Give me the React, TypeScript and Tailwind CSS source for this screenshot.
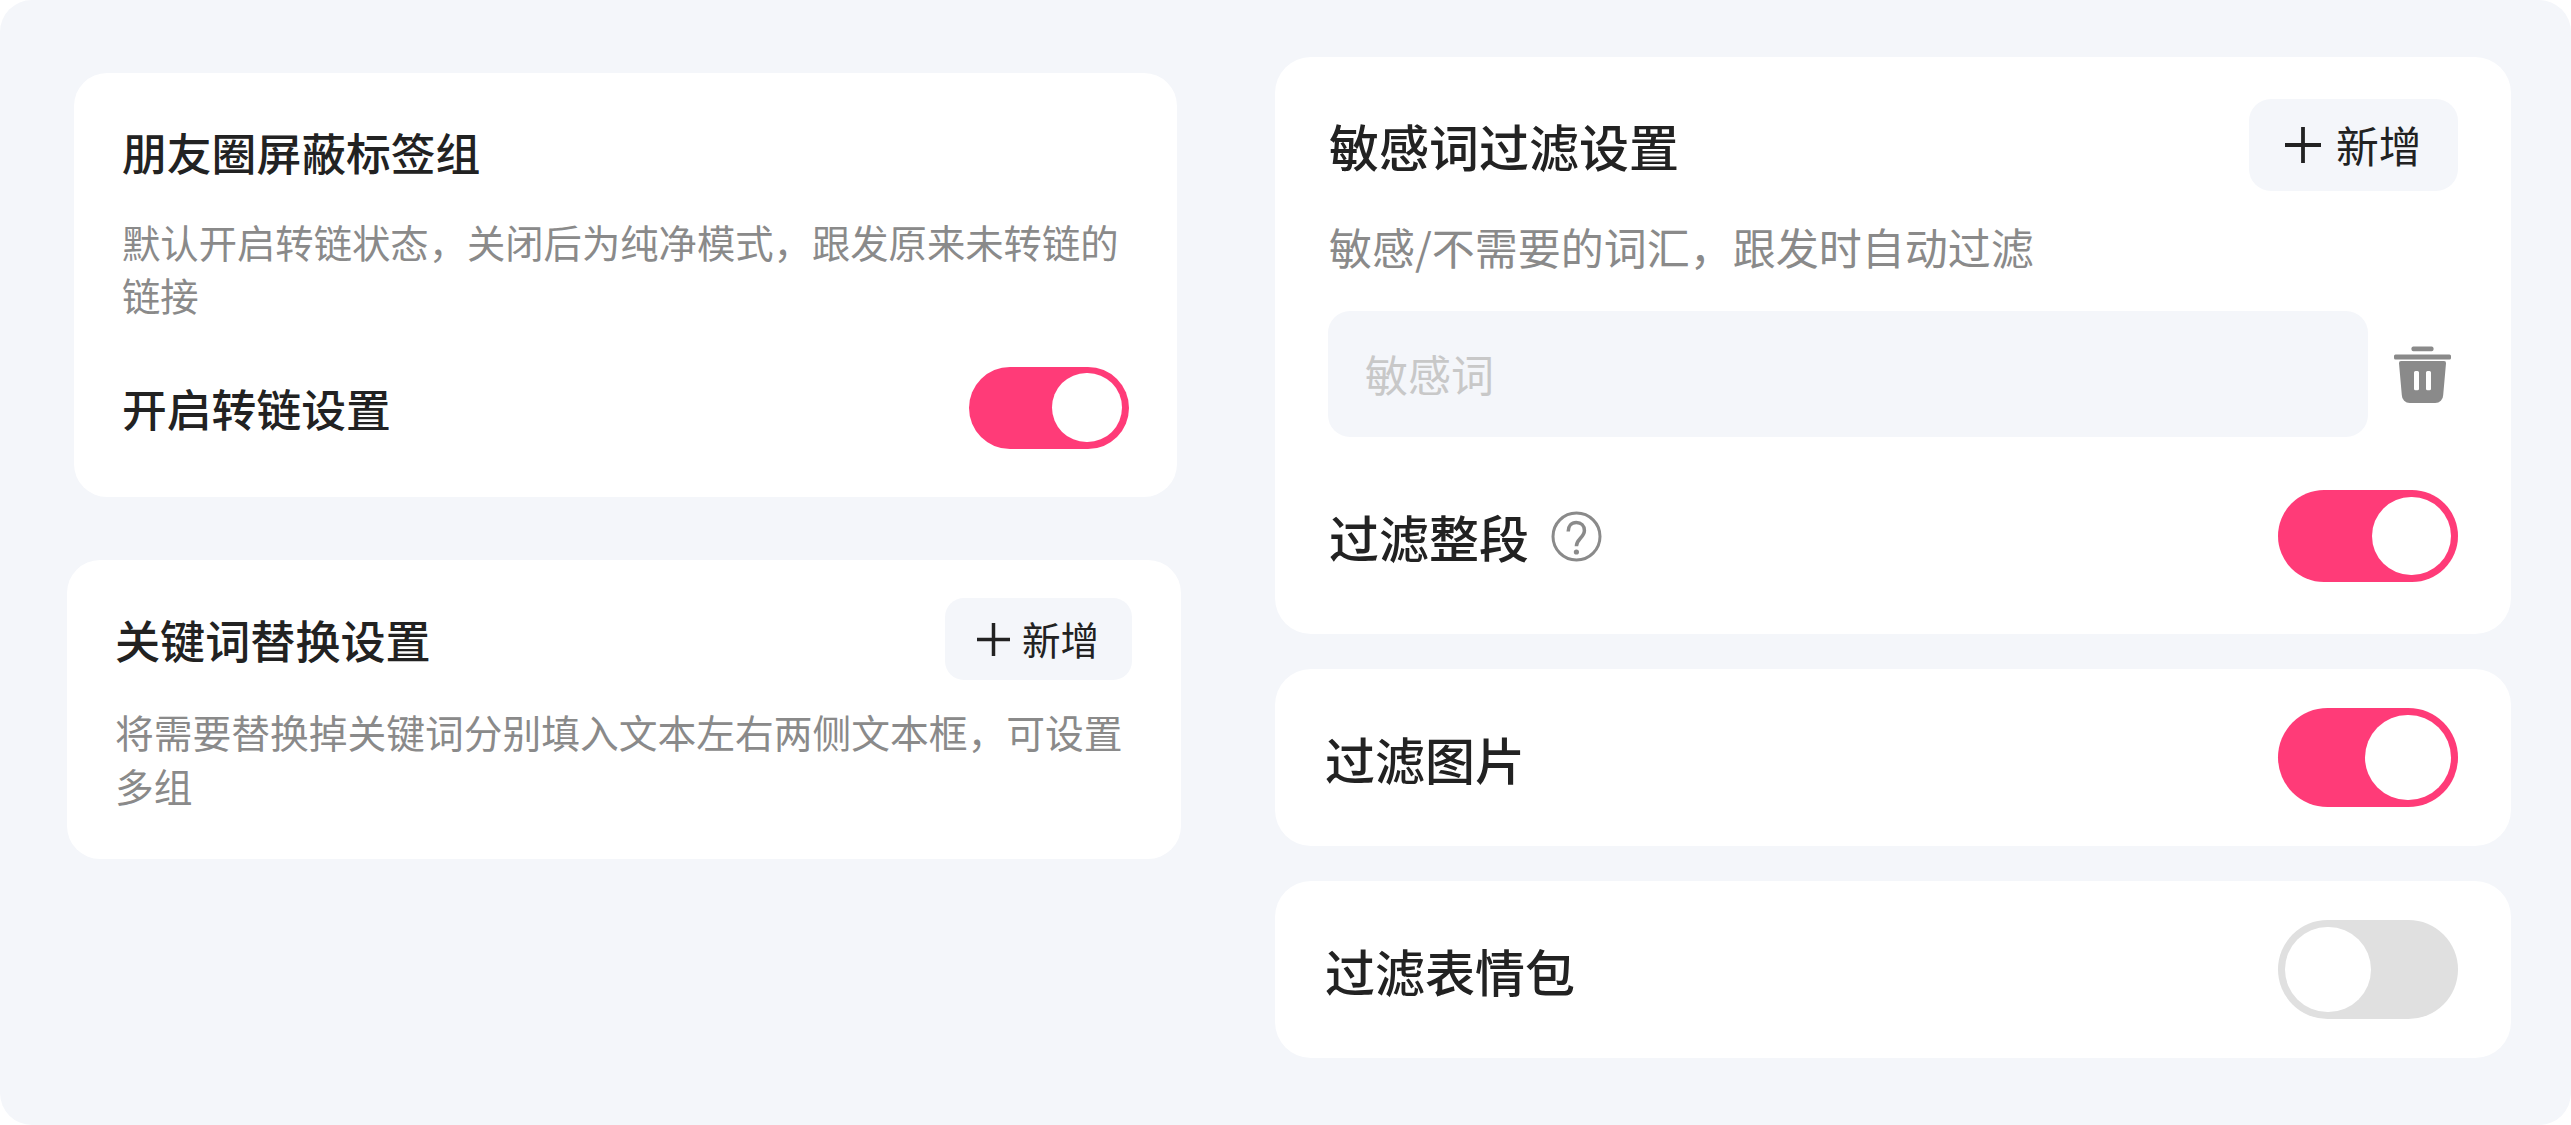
import React, { useState } from 'react';

function PlusIcon({ className }: { className: string }) {
  return (
    <svg className={className} viewBox="0 0 36 36" fill="none" stroke="currentColor" strokeWidth="3.8">
      <path d="M18 0v36M0 18h36" />
    </svg>
  );
}

function TrashIcon() {
  return (
    <svg className="w-[57px] h-[57px] shrink-0" viewBox="0 0 57 57" fill="#8a8a8a">
      <rect x="17.5" y="0.5" width="22" height="4.8" rx="1.8" />
      <rect x="0" y="8.4" width="57" height="5" rx="1.5" />
      <path
        fillRule="evenodd"
        d="M7 15h43a2 2 0 0 1 2 2.2L49.2 49a8 8 0 0 1-8 8H15.8a8 8 0 0 1-8-8L5 17.2A2 2 0 0 1 7 15zM21.5 25a1.5 1.5 0 0 0-1.5 1.5v16.3a1.5 1.5 0 0 0 1.5 1.5h2a1.5 1.5 0 0 0 1.5-1.5V26.5a1.5 1.5 0 0 0-1.5-1.5zM33.5 25a1.5 1.5 0 0 0-1.5 1.5v16.3a1.5 1.5 0 0 0 1.5 1.5h2a1.5 1.5 0 0 0 1.5-1.5V26.5a1.5 1.5 0 0 0-1.5-1.5z"
      />
    </svg>
  );
}

function HelpIcon() {
  return (
    <svg className="w-[51px] h-[51px] shrink-0" viewBox="0 0 51 51" fill="none" stroke="#8a8a8a" strokeWidth="3">
      <circle cx="25.5" cy="25.5" r="23.5" />
      <path d="M17.2 20.500c0-5.600 3.200-9 8.100-9s8.100 3.300 8.100 8c0 3.200-1.600 5.200-4 7.800-2.700 2.900-4 4.200-4 8" strokeWidth="3.500" />
      <circle cx="25.400" cy="41" r="2.600" fill="#8a8a8a" stroke="none" />
    </svg>
  );
}

type SwitchProps = { defaultOn?: boolean; track: string; knob: string };

function Switch({ defaultOn = false, track, knob }: SwitchProps) {
  const [on, setOn] = useState(defaultOn);

  return (
    <button
      type="button"
      role="switch"
      aria-checked={on}
      onClick={() => setOn(!on)}
      className={`flex items-center shrink-0 rounded-full px-[7px] ${on ? 'justify-end bg-[#ff3b78]' : 'justify-start bg-[#e0e0e0]'} ${track}`}
    >
      <span className={`block rounded-full bg-white ${knob}`} />
    </button>
  );
}

export default function App() {
  return (
    <div className="flex items-start w-[2571px] h-[1125px] rounded-[32px] bg-[#f4f6fa] text-[#222222] font-['Noto_Sans_CJK_SC',sans-serif] overflow-hidden">
      <div className="flex flex-col w-[1275px] pl-[67px] pt-[73px] gap-[63px]">
        <section className="ml-[7px] w-[1103px] h-[424px] rounded-[33px] bg-white pl-[48px] pr-[48px] pt-[46px]">
          <h2 className="text-[44.8px] leading-[66px] font-medium">朋友圈屏蔽标签组</h2>
          <p className="mt-[30px] text-[38.35px] leading-[53.4px] text-[#8a8a8a] whitespace-nowrap">
            默认开启转链状态，关闭后为纯净模式，跟发原来未转链的
            <br />
            链接
          </p>
          <div className="flex items-center justify-between mt-[45px] h-[82px]">
            <span className="pt-px text-[44.8px] leading-[66px] font-medium">开启转链设置</span>
            <Switch defaultOn track="w-[160px] h-[82px]" knob="w-[70px] h-[69px]" />
          </div>
        </section>

        <section className="w-[1114px] h-[299px] rounded-[33px] bg-white pl-[48px] pr-[49px] pt-[38px]">
          <div className="flex items-center justify-between h-[82px]">
            <h2 className="pt-px text-[45.1px] leading-[66px] font-medium">关键词替换设置</h2>
            <button type="button" className="flex items-center w-[187px] h-[82px] pl-[32px] gap-[12px] rounded-[19px] bg-[#f4f6fa]">
              <PlusIcon className="w-[33px] h-[33px]" />
              <span className="pb-[2px] text-[38.6px] leading-[54px]">新增</span>
            </button>
          </div>
          <p className="mt-[24px] text-[38.75px] leading-[54px] text-[#8a8a8a] whitespace-nowrap">
            将需要替换掉关键词分别填入文本左右两侧文本框，可设置
            <br />
            多组
          </p>
        </section>
      </div>

      <div className="flex flex-col w-[1236px] pt-[57px] gap-[35px]">
        <section className="h-[577px] rounded-[36px] bg-white pl-[53px] pr-[53px] pt-[42px]">
          <div className="flex items-center justify-between h-[92px]">
            <h2 className="pl-px text-[50px] leading-[72px] font-medium">敏感词过滤设置</h2>
            <button type="button" className="flex items-center w-[209px] h-[92px] pl-[36px] gap-[15px] rounded-[22px] bg-[#f4f6fa]">
              <PlusIcon className="w-[36px] h-[36px]" />
              <span className="pb-[2px] text-[42.8px] leading-[60px]">新增</span>
            </button>
          </div>
          <p className="mt-[25px] pl-px text-[43px] leading-[60px] text-[#8a8a8a]">敏感/不需要的词汇，跟发时自动过滤</p>
          <div className="flex items-center mt-[35px] gap-[26px]">
            <div className="flex items-center w-[1040px] h-[126px] pl-[37px] rounded-[22px] bg-[#f4f6fa]">
              <span className="pb-[2px] text-[43px] leading-[60px] text-[#c8c8c8]">敏感词</span>
            </div>
            <TrashIcon />
          </div>
          <div className="flex items-center justify-between mt-[53px] h-[92px]">
            <div className="flex items-center gap-[22px]">
              <span className="pl-px text-[50px] leading-[72px] font-medium">过滤整段</span>
              <HelpIcon />
            </div>
            <Switch defaultOn track="w-[180px] h-[92px]" knob="w-[79px] h-[78px]" />
          </div>
        </section>

        <section className="flex items-center justify-between h-[177px] rounded-[36px] bg-white pl-[50px] pr-[53px]">
          <span className="text-[50px] leading-[72px] font-medium">过滤图片</span>
          <Switch defaultOn track="w-[180px] h-[99px]" knob="w-[86px] h-[85px]" />
        </section>

        <section className="flex items-center justify-between h-[177px] rounded-[36px] bg-white pl-[50px] pr-[53px]">
          <span className="text-[50px] leading-[72px] font-medium">过滤表情包</span>
          <Switch track="w-[180px] h-[99px]" knob="w-[86px] h-[85px]" />
        </section>
      </div>
    </div>
  );
}
